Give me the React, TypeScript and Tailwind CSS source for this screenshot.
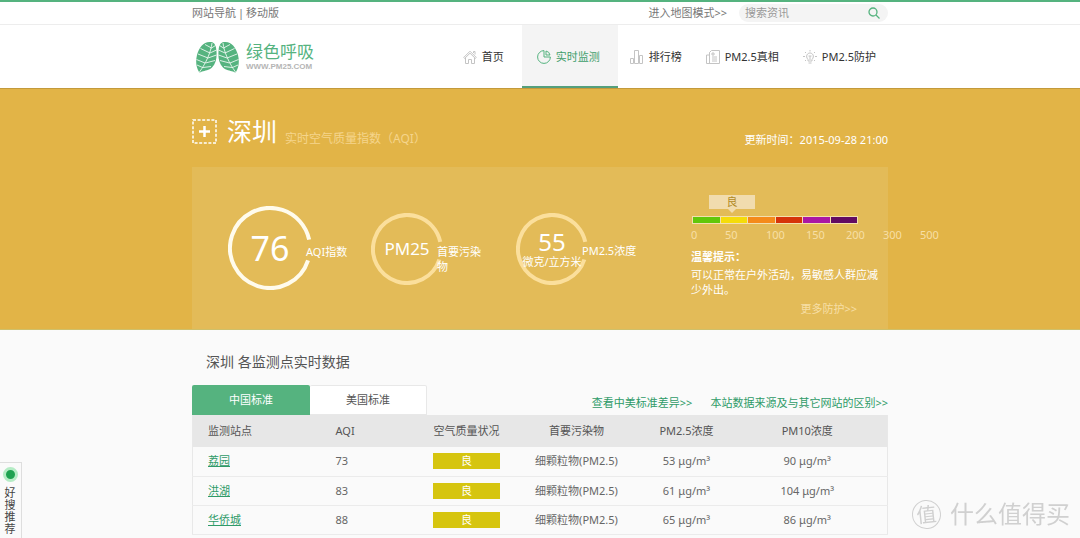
import type { ReactNode } from 'react'
import clsx from 'clsx'

const GREEN = '#55b37f'

const stations = [
  { name: '荔园', aqi: 73, level: '良', pollutant: '细颗粒物(PM2.5)', pm25: 53, pm10: 90 },
  { name: '洪湖', aqi: 83, level: '良', pollutant: '细颗粒物(PM2.5)', pm25: 61, pm10: 104 },
  { name: '华侨城', aqi: 88, level: '良', pollutant: '细颗粒物(PM2.5)', pm25: 65, pm10: 86 },
]

const levelColors = ['bg-[#62c70a]', 'bg-[#f5dc0a]', 'bg-[#f58a1a]', 'bg-[#d6330a]', 'bg-[#aa17a5]', 'bg-[#620a62]']
const levelMarks = [0, 50, 100, 150, 200, 300, 500]

function Container({ className, children }: { className?: string; children: ReactNode }) {
  return <div className={clsx('mx-auto w-full max-w-[696px]', className)}>{children}</div>
}

function Leaf() {
  return (
    <>
      <path
        d="M15 1C8 0 3 6 1 14c-1.500 6-1 12 2 17 1 1 2 0 3-.500 3-1 7-1 10-4 4-4 5-10 4.500-16C20.200 5 19 1.500 15 1z"
        fill={GREEN}
      />
      <path
        d="M16 2C15 11 10 22 3.500 31M15.500 7 9 3.500M14 12 4.500 7.500M12 17 2 13M9 22 .500 18.500M6.500 26.500 1 24M15.500 7l4-2.500M14 12l6.500-3M12 17l8.500-3M9.500 22l9.500-2.500M7 26.500l8-1"
        fill="none"
        stroke="#fff"
        strokeWidth="0.800"
      />
    </>
  )
}

function Logo() {
  return (
    <a href="#" className="flex items-center gap-[7px] pl-1">
      <svg width="43" height="32" viewBox="0 0 43 32" aria-hidden="true">
        <Leaf />
        <g transform="translate(43 0) scale(-1 1)">
          <Leaf />
        </g>
      </svg>
      <span className="flex flex-col">
        <span className="text-[17px] leading-[20px] text-[#55b37f]">绿色呼吸</span>
        <span className="font-['Liberation_Sans'] text-[8px] leading-[9px] font-bold text-[#b5b5b5]">WWW.PM25.COM</span>
      </span>
    </a>
  )
}

function NavIcon({ children, active }: { children: ReactNode; active?: boolean }) {
  return (
    <svg
      width="14"
      height="14"
      viewBox="0 0 14 14"
      fill="none"
      stroke={active ? GREEN : '#c4c4c4'}
      strokeWidth="1"
      aria-hidden="true"
    >
      {children}
    </svg>
  )
}

const navItems = [
  {
    label: '首页',
    icon: <path d="M.7 7.5 7 1.2l6.3 6.3-1 .9L7 3.2 1.700 8.400zM2.500 8v5.500h3V9.500h3v4h3V8M10.500 3V1.500h1.500v3" />,
  },
  {
    label: '实时监测',
    active: true,
    icon: <path d="M7 .600a6.400 6.400 0 1 0 6.400 6.400H7zM9 1v4h4A5 5 0 0 0 9 1z" />,
  },
  { label: '排行榜', icon: <path d="M.500 8.500h3v5h-3zM4.500.500h4v13h-4zM9.500 5.500h3v8h-3z" /> },
  { label: 'PM2.5真相', icon: <path d="M3.500 5H.500v8.500h13V.500h-8l-2 2zM3.500 2.500v11M6 7h5M6 9h5M6 11h5M6 3h2v2H6z" /> },
  {
    label: 'PM2.5防护',
    icon: (
      <path d="M5 9.500C2 6 4.500 3 7 3s5 3 2 6.500V11H5zM5.500 13h3M7 6v4M5.500 6h3M7 0v1.500M2 2l1 1M12 2l-1 1M0 6.500h2M12 6.500h2M2 11l1-1M12 11l-1-1" />
    ),
  },
]

function Ring({ size, faint, children }: { size: number; faint?: boolean; children: ReactNode }) {
  const r = size / 2 - 2
  return (
    <div className="relative shrink-0">
      <svg width={size} height={size} viewBox={`0 0 ${size} ${size}`} aria-hidden="true">
        {/* the ring is open on the right, where the label starts */}
        <circle
          cx={size / 2}
          cy={size / 2}
          r={r}
          fill="none"
          stroke={faint ? '#fbdf9c' : '#fffbec'}
          strokeWidth="4"
          pathLength="360"
          strokeDasharray="330 30"
          transform={`rotate(18 ${size / 2} ${size / 2})`}
        />
      </svg>
      <div className="absolute inset-0 flex flex-col items-center justify-center whitespace-nowrap">{children}</div>
    </div>
  )
}

function TopBar() {
  return (
    <div className="border-t-2 border-b border-t-[#55b37f] border-b-[#ededed] bg-white text-[#777]">
      <Container className="flex h-[22px] items-center justify-between">
        <div className="flex gap-[2px]">
          <a href="#">网站导航</a>
          <span>|</span>
          <a href="#">移动版</a>
        </div>
        <div className="flex items-center gap-3">
          <a href="#">进入地图模式&gt;&gt;</a>
          <form className="flex h-[18px] w-[149px] items-center rounded-full bg-[#f4f4f4] pr-2 pl-[6px]">
            <input
              type="text"
              aria-label="搜索资讯"
              placeholder="搜索资讯"
              className="min-w-0 flex-1 bg-transparent outline-none placeholder:text-[#999]"
            />
            <button type="button" aria-label="搜索">
              <svg width="12" height="12" viewBox="0 0 12 12" fill="none" stroke={GREEN} strokeWidth="1.300">
                <circle cx="5" cy="5" r="4" />
                <path d="m8 8 3.500 3.500" />
              </svg>
            </button>
          </form>
        </div>
      </Container>
    </div>
  )
}

function Header() {
  return (
    <header className="bg-white">
      <Container className="flex h-[63px] justify-between">
        <Logo />
        <nav className="flex">
          {navItems.map((item) => (
            <a
              key={item.label}
              href="#"
              className={clsx(
                'flex items-center gap-[5px] border-b-2 pt-[3px]',
                item.active
                  ? 'ml-[6px] border-[#55a07d] bg-[#f4f4f4] pr-[18px] pl-[15px] text-[#3f9e6b]'
                  : 'border-transparent px-3 text-[#333]',
              )}
            >
              <NavIcon active={item.active}>{item.icon}</NavIcon>
              {item.label}
            </a>
          ))}
        </nav>
      </Container>
    </header>
  )
}

function LevelScale() {
  return (
    <div>
      <div className="relative ml-[18px] h-[14px] w-[46px] bg-[#f1dcae] text-center leading-[14px] text-[#b08a25]">
        良
        <span className="absolute top-full left-1/2 -translate-x-1/2 border-x-4 border-t-4 border-x-transparent border-t-[#f1dcae]" />
      </div>
      <div className="mt-[7px] ml-px flex w-[166px] gap-px border border-[#f3dfae] bg-[#f3dfae]">
        {levelColors.map((color) => (
          <span key={color} className={clsx('h-[6px] flex-1', color)} />
        ))}
      </div>
      <div className="mt-[3px] grid grid-cols-[34px_41px_40px_40px_37px_37px_20px] leading-[15px] text-[#f7dfa6]">
        {levelMarks.map((mark) => (
          <span key={mark}>{mark}</span>
        ))}
      </div>
    </div>
  )
}

function Hero() {
  return (
    <section className="border-t border-b border-t-[#c39a3b] border-b-[#cfc06a] bg-[#e2b447] text-white">
      <Container>
        <div className="flex h-[78px] items-end justify-between pb-5">
          <div className="flex items-end gap-2">
            <button type="button" aria-label="选择城市" className="mb-[3px]">
              <svg width="25" height="25" viewBox="0 0 25 25" fill="none" stroke="#fff">
                <rect x="1" y="1" width="23" height="23" strokeWidth="1.500" strokeDasharray="3 1.600" />
                <path d="M12.500 7v11M7 12.500h11" strokeWidth="2.500" />
              </svg>
            </button>
            <h1 className="pl-[2px] text-[25px] leading-[32px]">深圳</h1>
            <span className="text-xs leading-[16px] text-[#f5d58c]">实时空气质量指数（AQI）</span>
          </div>
          <span className="leading-[15px]">更新时间：2015-09-28 21:00</span>
        </div>

        <div className="grid h-[162px] grid-cols-[143fr_145fr_175fr_197fr] bg-[#e3bb58] pl-9">
          <div className="flex items-center">
            <Ring size={84}>
              <span className="text-[34px]">76</span>
            </Ring>
            <span className="relative -ml-[6px] pt-2">AQI指数</span>
          </div>
          <div className="flex items-center pt-[2px]">
            <Ring size={72} faint>
              <span className="text-[17px]">PM25</span>
            </Ring>
            <span className="relative -ml-[6px] w-[46px] pt-5 leading-[15px]">首要污染物</span>
          </div>
          <div className="flex items-center pt-[2px]">
            <Ring size={72} faint>
              <span className="text-2xl leading-[22px]">55</span>
              <span className="pt-1 leading-[10px]">微克/立方米</span>
            </Ring>
            <span className="relative -ml-[6px] pt-1">PM2.5浓度</span>
          </div>
          <div className="min-w-0 pt-7">
            <LevelScale />
            <div className="mt-[7px] w-[190px] leading-[15px]">
              <strong className="block">温馨提示：</strong>
              <p className="mt-[3px]">可以正常在户外活动，易敏感人群应减少外出。</p>
              <a href="#" className="mt-1 block pr-6 text-right text-[#f7dfa6]">
                更多防护&gt;&gt;
              </a>
            </div>
          </div>
        </div>
      </Container>
    </section>
  )
}

function StationTable() {
  return (
    <table className="w-full table-fixed border-collapse border-x border-[#e8e8e8] text-center text-[#666]">
      <colgroup>
        <col className="w-[128px]" />
        <col className="w-[91px]" />
        <col className="w-[110px]" />
        <col className="w-[110px]" />
        <col className="w-[110px]" />
        <col />
      </colgroup>
      <thead className="bg-[#e7e7e7] text-[#555]">
        <tr className="h-8 *:font-normal">
          <th className="pl-[15px] text-left">监测站点</th>
          <th className="pl-[15px] text-left">AQI</th>
          <th>空气质量状况</th>
          <th>首要污染物</th>
          <th>PM2.5浓度</th>
          <th className="pr-[14px]">PM10浓度</th>
        </tr>
      </thead>
      <tbody>
        {stations.map((s) => (
          <tr key={s.name} className="h-[29px] border-b border-[#ebebeb]">
            <td className="pl-[15px] text-left">
              <a href="#" className="text-[#2f9a68] underline">
                {s.name}
              </a>
            </td>
            <td className="pl-[15px] text-left">{s.aqi}</td>
            <td>
              <span className="mx-auto block h-4 w-[67px] bg-[#d6c50f] leading-4 text-white">{s.level}</span>
            </td>
            <td>{s.pollutant}</td>
            <td>{s.pm25} μg/m³</td>
            <td className="pr-[14px]">{s.pm10} μg/m³</td>
          </tr>
        ))}
      </tbody>
    </table>
  )
}

export default function App() {
  return (
    <div className="relative flex min-h-screen flex-col bg-[#fafafa] font-['Noto_Sans','Noto_Sans_CJK_SC',sans-serif] text-[11px] leading-[16px]">
      <TopBar />
      <Header />
      <Hero />

      <Container>
        <h2 className="h-[55px] pt-[22px] pl-[14px] text-sm text-[#555]">深圳 各监测点实时数据</h2>
        <div className="flex items-end justify-between">
          <div className="flex">
            <button type="button" className="h-[30px] w-[118px] rounded-t-xs bg-[#55b37f] text-white">
              中国标准
            </button>
            <button
              type="button"
              className="h-[30px] w-[117px] rounded-t-xs border border-l-0 border-[#e8e8e8] bg-white text-[#555]"
            >
              美国标准
            </button>
          </div>
          <div className="flex gap-[18px] pb-1 text-[#2f9a68]">
            <a href="#">查看中美标准差异&gt;&gt;</a>
            <a href="#">本站数据来源及与其它网站的区别&gt;&gt;</a>
          </div>
        </div>
        <StationTable />
      </Container>

      <aside className="fixed bottom-0 left-0 flex h-[76px] w-[22px] flex-col items-center border-t border-r border-[#dedede] bg-[#fafafa] pt-1 text-[#444]">
        <span className="size-[15px] rounded-full border-[3px] border-[#b5ecc5] bg-[#1fa251]" />
        <span className="mt-[5px] w-3 pr-px text-[11px] leading-[12px]">好搜推荐</span>
      </aside>

      <div className="fixed right-[10px] bottom-[9px] flex items-center gap-[9px] text-[#d0d0d0]">
        <span className="flex size-[29px] -rotate-6 items-center justify-center rounded-full border border-[#d0d0d0] text-xl">
          值
        </span>
        <span className="text-2xl leading-[30px]">什么值得买</span>
      </div>
    </div>
  )
}
